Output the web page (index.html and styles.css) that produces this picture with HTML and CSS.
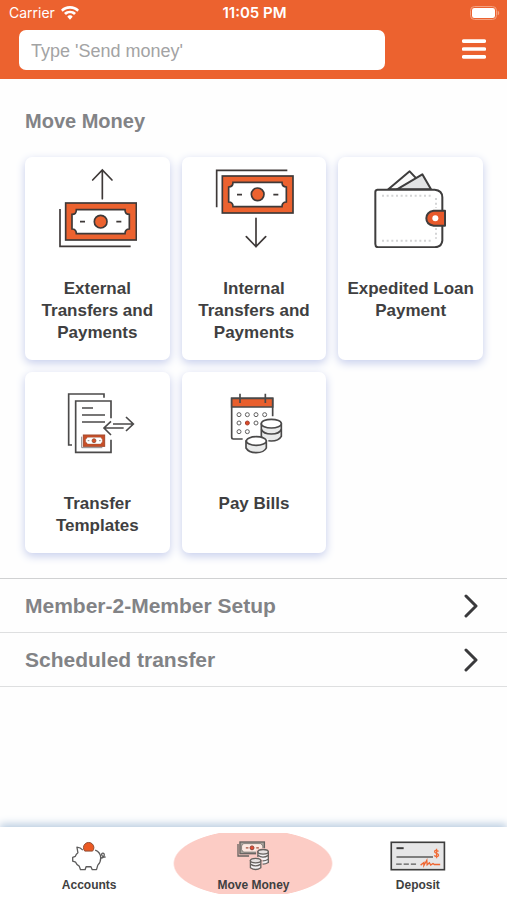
FILE: index.html
```html
<!DOCTYPE html>
<html lang="en">
<head>
<meta charset="utf-8">
<meta name="viewport" content="width=device-width, initial-scale=1">
<title>Move Money</title>
<link rel="stylesheet" href="styles.css">
</head>
<body>
<header class="header">
  <div class="status">
    <span class="carrier">Carrier
      <svg class="wifi" viewBox="0 0 54 42" aria-hidden="true"><path d="M27 0C16 0 7 4 0 11l5 6c6-6 13-9 22-9s16 3 22 9l5-6C47 4 38 0 27 0zM27 14c-7 0-13 2-18 7l6 6c3-3 7-5 12-5s9 2 12 5l6-6c-5-5-11-7-18-7zM27 28c-3 0-6 1-8 4l8 9 8-9c-2-3-5-4-8-4z" fill="#fff"/></svg>
    </span>
    <span class="clock">11:05 PM</span>
    <span class="power">
      <svg class="battery" viewBox="0 0 90 42" aria-hidden="true"><rect x="1.5" y="1.5" width="78" height="39" rx="12" fill="none" stroke="#f4a180" stroke-width="3"/><rect x="6" y="6" width="69" height="30" rx="7" fill="#fff"/><path d="M83 14c6 2 6 12 0 14z" fill="#f4a180"/></svg>
    </span>
  </div>
  <div class="toolbar">
    <input class="search" type="text" placeholder="Type 'Send money'" aria-label="Search">
    <button class="menu" type="button" aria-label="Menu">
      <svg viewBox="0 0 72 60" aria-hidden="true"><path d="M5 6.500h62M5 30h62M5 53.500h62" stroke="#fff" stroke-width="11" stroke-linecap="round"/></svg>
    </button>
  </div>
</header>

<main class="main">
  <section class="section">
    <h1 class="title">Move Money</h1>
    <div class="tiles">
      <a class="tile" href="#external">
        <svg class="tile-icon" viewBox="110 55 240 240" fill="none" stroke="#3e3938" stroke-width="5" aria-hidden="true">
          <path d="M246 147V61M217 91l29-30 29 30" stroke-linecap="round"/>
          <path d="M119 178V290H331"/>
          <rect x="136" y="160" width="212" height="111" fill="#ec622f"/>
          <path d="M168 180H314C314 188 319 194 327 194V238C319 238 314 244 314 252H168C168 244 163 238 155 238V194C163 194 168 188 168 180Z" fill="#fff"/>
          <circle cx="241" cy="216" r="19" fill="#ec622f"/>
          <path d="M179 216h15M288 216h15"/>
        </svg>
        <span>External Transfers and Payments</span>
      </a>
      <a class="tile" href="#internal">
        <svg class="tile-icon" viewBox="112 55 240 240" fill="none" stroke="#3e3938" stroke-width="5" aria-hidden="true">
          <path d="M238 206V291M209 261l29 30 29-30" stroke-linecap="round"/>
          <path d="M120 173V62H332"/>
          <rect x="137" y="79" width="212" height="111" fill="#ec622f"/>
          <path d="M169 98H316C316 106 321 112 329 112V157C321 157 316 163 316 171H169C169 163 164 157 156 157V112C164 112 169 106 169 98Z" fill="#fff"/>
          <circle cx="243" cy="134" r="19" fill="#ec622f"/>
          <path d="M181 135h15M290 135h15"/>
        </svg>
        <span>Internal Transfers and Payments</span>
      </a>
      <a class="tile" href="#loan">
        <svg class="tile-icon" viewBox="109 52 240 240" fill="none" stroke="#3e3d3d" stroke-width="6" stroke-linejoin="round" aria-hidden="true">
          <path d="M161 116L225 62 242 80 250 116Z" fill="#fafafa"/>
          <path d="M187 116L263 71 289 116Z" fill="#e2e3e4"/>
          <path d="M128 117H300Q323 119 323 140V270Q321 289 300 290H130Q122 289 122 280V124Q122 118 128 117Z" fill="#fff"/>
          <path d="M142 135H294M142 270H294" stroke="#d3d4d5" stroke-width="6" stroke-dasharray="6 8"/>
          <path d="M304 142V172M304 232V264" stroke="#d3d4d5" stroke-width="6" stroke-dasharray="6 8"/>
          <path d="M297 180H331V225H297Q275 222 275 203T297 180Z" fill="#e7592b"/>
          <circle cx="302" cy="203" r="9" fill="#fff" stroke="none"/>
        </svg>
        <span>Expedited Loan Payment</span>
      </a>
      <a class="tile" href="#templates">
        <svg class="tile-icon" viewBox="110 52 240 240" fill="none" stroke="#4b4a4a" stroke-width="5" aria-hidden="true">
          <path d="M155 238H145V85H251V96"/>
          <path d="M272 158V106H166V260H272V222"/>
          <path d="M185 127h33M185 148h69M185 169h69"/>
          <path d="M278 175H338M317 154L339 175 317 196M310 187H252M272 167L251 187 272 208"/>
          <path d="M184 213V246H246" stroke="#8b898b" stroke-width="3"/>
          <rect x="189" y="208" width="64" height="34" fill="#c94e27" stroke="#a34b2e" stroke-width="3"/>
          <path d="M201 215H242Q242 219 246 220V230Q242 231 242 235H201Q201 231 196 230V220Q201 219 201 215Z" fill="#fff" stroke="#8a4933" stroke-width="1"/>
          <circle cx="221" cy="225" r="6" fill="#d75227" stroke="#7e3f2c" stroke-width="2"/>
          <path d="M202 225h5M236 225h5" stroke-width="2"/>
        </svg>
        <span>Transfer Templates</span>
      </a>
      <a class="tile" href="#bills">
        <svg class="tile-icon" viewBox="114 52 240 240" fill="none" stroke="#4a4949" stroke-width="5" aria-hidden="true">
          <path d="M200 220H172Q167 220 167 215V98H290V152"/>
          <path d="M167 98H290V124H167Z" fill="#e95f2d"/>
          <path d="M192 84V112M268 84V112"/>
          <g stroke="#626161" stroke-width="3">
            <circle cx="189" cy="147" r="6"/><circle cx="214" cy="147" r="6"/><circle cx="240" cy="147" r="6"/><circle cx="266" cy="147" r="6"/>
            <circle cx="189" cy="172" r="6"/><circle cx="214" cy="172" r="6" fill="#dc4b28" stroke="#a64031"/><circle cx="240" cy="172" r="6"/>
            <circle cx="189" cy="198" r="6"/><circle cx="214" cy="198" r="6"/>
          </g>
          <path d="M256 175V212Q264 226 286 226T316 212V175Z" fill="#e9eaea"/>
          <ellipse cx="286" cy="174" rx="30" ry="13" fill="#fff"/>
          <path d="M256 191Q262 205 286 205T316 191"/>
          <path d="M210 226V247Q218 261 241 261T271 247V226Z" fill="#e9eaea" stroke="#fff" stroke-width="12"/>
          <path d="M210 226V247Q218 261 241 261T271 247V226Z" fill="#e9eaea"/>
          <ellipse cx="241" cy="226" rx="30" ry="13" fill="#fff"/>
        </svg>
        <span>Pay Bills</span>
      </a>
    </div>
  </section>

  <ul class="links">
    <li><a class="link" href="#member">Member-2-Member Setup
      <svg class="chevron" viewBox="0 0 14 24" aria-hidden="true"><path d="M2 2l10 10L2 22" fill="none" stroke="#3a3a3c" stroke-width="3" stroke-linecap="round" stroke-linejoin="round"/></svg></a></li>
    <li><a class="link" href="#scheduled">Scheduled transfer
      <svg class="chevron" viewBox="0 0 14 24" aria-hidden="true"><path d="M2 2l10 10L2 22" fill="none" stroke="#3a3a3c" stroke-width="3" stroke-linecap="round" stroke-linejoin="round"/></svg></a></li>
  </ul>
</main>

<nav class="tabs">
  <a class="tab" href="#accounts">
    <svg class="tab-icon" viewBox="180 76 174 92" fill="none" stroke="#5c5b5b" stroke-width="4" stroke-linejoin="round" aria-hidden="true">
      <path d="M248 104Q241 96 230 95L233 112Q227 116 225 123L217 126V138L226 141Q229 149 237 153L241 164H255L258 155H273L277 164H290L294 150Q303 141 303 127 302 110 286 104"/>
      <path d="M303 128C315 129 317 112 309 113 302 114 307 128 318 125"/>
      <path d="M254 107A16 16 0 1 1 278 107Z" fill="#ec5922" stroke="#8d4c34" stroke-width="3"/>
    </svg>
    <span>Accounts</span>
  </a>
  <a class="tab tab-active" href="#move" aria-current="page">
    <svg class="tab-icon" viewBox="165 76 174 92" fill="none" stroke="#66625f" stroke-width="4" aria-hidden="true">
      <path d="M206 85V122H240"/>
      <rect x="212" y="79" width="75" height="36" fill="#a9a49d"/>
      <path d="M223 84H276L282 91V103L276 110H223L217 103V91Z" fill="#fce9e2" stroke-width="2"/>
      <circle cx="249" cy="97" r="6" fill="#e7492e" stroke="#88443a" stroke-width="3"/>
      <path d="M230 97h8M262 97h8" stroke="#a3513c"/>
      <g stroke="#fcccc5" stroke-width="11"><path d="M267 108V142Q282 152 299 142V108Q283 98 267 108Z"/></g>
      <path d="M267 109V142Q282 152 299 142V109Z" fill="#f4f3f5"/>
      <ellipse cx="283" cy="109" rx="16" ry="7" fill="#e6e2e2"/>
      <path d="M267 120Q282 131 299 120M267 132Q282 142 299 132"/>
      <path d="M244 136V158Q260 169 276 158V136Q260 124 244 136Z" stroke="#fcccc5" stroke-width="11"/>
      <path d="M244 136V158Q260 169 276 158V136Z" fill="#f4f3f5"/>
      <ellipse cx="260" cy="136" rx="16" ry="7" fill="#e6e2e2"/>
      <path d="M244 147Q260 158 276 147"/>
    </svg>
    <span>Move Money</span>
  </a>
  <a class="tab" href="#deposit">
    <svg class="tab-icon" viewBox="157 76 174 92" fill="none" stroke="#5b5b5b" stroke-width="4" aria-hidden="true">
      <rect x="162" y="80" width="163" height="84" fill="#e6e6e7" stroke="#3d3d3d" stroke-width="5"/>
      <path d="M178 98H200" stroke="#3d3d3d" stroke-width="6"/>
      <path d="M178 125H290"/>
      <path d="M177 147h17M200 147h16M222 147h16"/>
      <path d="M307 108Q295 101 295 109C295 115 307 113 307 119 307 126 296 124 294 120M301 100V129" stroke="#f16a35"/>
      <path d="M252 150L262 142 262 151 271 135 272 149 279 143 283 150 290 145 294 148H312" stroke="#ef6530"/>
    </svg>
    <span>Deposit</span>
  </a>
</nav>
</body>
</html>
```
FILE: styles.css
```css
* {
  box-sizing: border-box;
}

body {
  margin: 0;
  min-height: 100vh;
  display: flex;
  flex-direction: column;
  background: #fefefe;
  color: #3f3f41;
  font-family: "Liberation Sans", Arial, sans-serif;
}

a {
  color: inherit;
  text-decoration: none;
}

svg {
  display: block;
}

.header {
  background: #ec622f;
  padding-bottom: 9px;
}

.status {
  display: grid;
  grid-template-columns: 1fr auto 1fr;
  align-items: center;
  height: 30px;
  padding: 0 7px 4px 9px;
  color: #fff;
  font: 400 14px/20px Inter, sans-serif;
}

.carrier {
  display: flex;
  align-items: center;
  gap: 6px;
}

.wifi {
  width: 18px;
  height: 14px;
}

.clock {
  font-size: 15px;
  font-weight: 600;
}

.power {
  display: flex;
  justify-content: flex-end;
}

.battery {
  width: 30px;
  height: 14px;
}

.toolbar {
  display: flex;
  align-items: center;
  gap: 77px;
  padding: 0 21px 0 19px;
}

.search {
  flex: 1;
  min-width: 0;
  height: 40px;
  padding: 2px 12px 0;
  border: 0;
  border-radius: 7px;
  background: #fff;
  color: #3f3f41;
  font: 18px/24px "Liberation Sans", Arial, sans-serif;
}

.search::placeholder {
  color: #a3a3a4;
  opacity: 1;
}

.menu {
  width: 24px;
  padding: 0 0 2px;
  border: 0;
  background: none;
}

.main {
  flex: 1;
}

.section {
  padding: 30px 24px 25px 25px;
}

.title {
  margin: 0 0 24px;
  color: #828386;
  font-size: 20px;
  line-height: 24px;
}

.tiles {
  display: grid;
  grid-template-columns: repeat(3, 1fr);
  gap: 12px;
}

.tile {
  display: flex;
  flex-direction: column;
  align-items: center;
  gap: 30px;
  padding: 11px 6px 16px;
  border-radius: 7px;
  background: #fff;
  box-shadow: 0 3px 10px #c5cdec;
  font-size: 17px;
  font-weight: 700;
  line-height: 22px;
  text-align: center;
}

.tile-icon {
  width: 80px;
  height: 80px;
}

.links {
  margin: 0;
  padding: 0;
  border-top: 1px solid #d0d1d2;
  list-style: none;
}

.link {
  display: flex;
  align-items: center;
  justify-content: space-between;
  padding: 15px 29px 14px 25px;
  border-bottom: 1px solid #dedfe0;
  color: #828386;
  font-size: 21px;
  font-weight: 700;
  line-height: 24px;
}

.chevron {
  width: 14px;
  height: 24px;
}

.tabs {
  display: grid;
  grid-template-columns: repeat(3, 1fr);
  justify-items: center;
  padding: 6px 7px;
  background: #fff;
  box-shadow: 0 -3px 8px #b9cce0;
}

.tab {
  display: flex;
  flex-direction: column;
  align-items: center;
  gap: 6px;
  width: 160px;
  max-width: 100%;
  padding: 8px 0 1px;
  font-size: 12px;
  font-weight: 700;
  line-height: 16px;
}

.tab-active {
  background: radial-gradient(80px 34px at center, #fcccc5 98%, transparent 100%);
}

.tab-icon {
  width: 58px;
  height: 30px;
}
```
